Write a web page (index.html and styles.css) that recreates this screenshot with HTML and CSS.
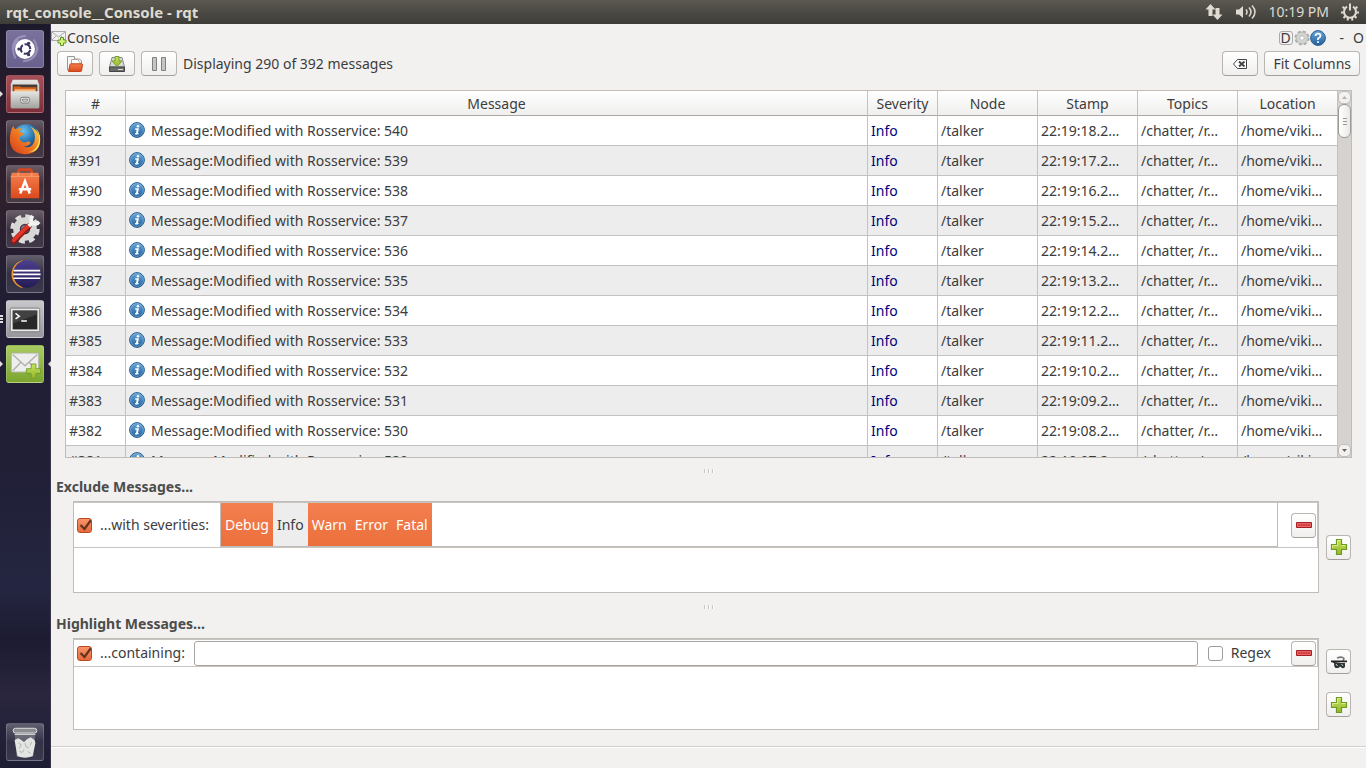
FILE: index.html
```html
<!DOCTYPE html>
<html lang="en">
<head>
<meta charset="utf-8">
<title>rqt_console__Console - rqt</title>
<link rel="stylesheet" href="styles.css">
</head>
<body>
<svg class="defs" aria-hidden="true">
  <defs>
    <linearGradient id="g-blue" x1="0" y1="0" x2="0" y2="1"><stop offset="0" stop-color="#6aa5da"/><stop offset="1" stop-color="#21619c"/></linearGradient>
    <linearGradient id="g-green" x1="0" y1="0" x2="0" y2="1"><stop offset="0" stop-color="#c9e45c"/><stop offset="1" stop-color="#92b52c"/></linearGradient>
    <linearGradient id="g-orange" x1="0" y1="0" x2="0" y2="1"><stop offset="0" stop-color="#f47f4e"/><stop offset="1" stop-color="#dc4a1c"/></linearGradient>
    <linearGradient id="g-silver" x1="0" y1="0" x2="0" y2="1"><stop offset="0" stop-color="#e6e6e4"/><stop offset="1" stop-color="#a2a29e"/></linearGradient>
    <radialGradient id="g-globe" cx=".4" cy=".25" r=".7"><stop offset="0" stop-color="#6cc3ec"/><stop offset=".6" stop-color="#256fae"/><stop offset="1" stop-color="#173d72"/></radialGradient>
    <linearGradient id="g-fox" x1="0" y1="1" x2="1" y2="0"><stop offset="0" stop-color="#d9381b"/><stop offset=".55" stop-color="#f08122"/><stop offset="1" stop-color="#ffe14d"/></linearGradient>
    <linearGradient id="g-eclipse" x1="0" y1="0" x2="0" y2="1"><stop offset="0" stop-color="#4b3f8f"/><stop offset="1" stop-color="#241b55"/></linearGradient>
    <symbol id="info" viewBox="0 0 16 16">
      <circle cx="8" cy="8" r="7.4" fill="url(#g-blue)" stroke="#285f92"/>
      <circle cx="8" cy="8" r="6.4" fill="none" stroke="#9cc4e8" stroke-opacity=".6" stroke-width=".8"/>
      <circle cx="9" cy="4.3" r="1.3" fill="#fff"/>
      <path d="M6.2 7h2.9L8.1 11.6h1.5M6 11.6 7.6 11.9 8.5 7" fill="none" stroke="#fff" stroke-width="1.4"/>
    </symbol>
    <symbol id="plus" viewBox="0 0 18 18">
      <path d="M6.5 1.5h5v5h5v5h-5v5h-5v-5h-5v-5h5z" fill="url(#g-green)" stroke="#6d9a23" stroke-width="1.2"/>
      <path d="M7.5 7.5v-5h3M2.5 10V7.5h5m4 0h4" fill="none" stroke="#e2f29a" stroke-width=".8"/>
    </symbol>
    <symbol id="minus" viewBox="0 0 16 6">
      <path d="M.5.5h15v5H.5z" fill="#d64545" stroke="#a91d24"/>
      <path d="M1.5 1.5h13v3h-13z" fill="none" stroke="#ea7676" stroke-width=".7"/>
    </symbol>
  </defs>
</svg>

<header class="topbar">
  <h1 class="topbar-title">rqt_console__Console - rqt</h1>
  <svg class="ind-net" viewBox="0 0 18 16"><path d="M5.500 0 .5 5.500h3V12h4V5.500h3zM12.500 16l-5-5.500h3V4h4v6.500h3z" fill="#dfdbd2"/></svg>
  <svg class="ind-vol" viewBox="0 0 20 16"><path d="M0 5.500h3L7 2v12l-4-3.500H0z" fill="#dfdbd2"/><path d="M10 5.500q2 2.500 0 5M13 3.500q4 4.500 0 9M16 1.500q6 6.500 0 13" fill="none" stroke="#dfdbd2" stroke-width="1.5"/></svg>
  <time class="clock">10:19 PM</time>
  <svg class="ind-power" viewBox="0 0 18 18"><path d="M9 .5v7M6 3.600a6 6 0 1 0 6 0" fill="none" stroke="#dfdbd2" stroke-width="2"/><path d="M3.500 5 1.500 4M14.500 5l2-1M2.500 9.500H0M15.500 9.500H18M4.500 13 2.500 15M13.500 13l2 2M7 15l-.500 2.500M11 15l.500 2.500" stroke="#dfdbd2" stroke-width="2"/></svg>
</header>

<div class="desktop">
  <nav class="launcher" aria-label="Launcher">
    <button class="tile tile-dash" aria-label="Dash">
      <svg viewBox="0 0 38 38"><path d="M6 20Q6 6 20 5M32 17Q32 31 17 32M9 29Q3 18 12 9M28 9Q36 20 26 29" fill="none" stroke="#c1b9dc" stroke-opacity=".5" stroke-width="2"/><circle cx="19" cy="19" r="10.500" fill="#fff"/><circle cx="19.500" cy="19" r="5" fill="none" stroke="#3e3562" stroke-width="2.300" stroke-dasharray="8.500 2" stroke-dashoffset="-1"/><circle cx="12.500" cy="19" r="1.700" fill="#3e3562"/><circle cx="22.800" cy="13" r="1.700" fill="#3e3562"/><circle cx="22.800" cy="25" r="1.700" fill="#3e3562"/></svg>
    </button>
    <button class="tile tile-files running" aria-label="Files">
      <svg viewBox="0 0 38 38"><path d="M6 4h26l2 5v24q0 1-1 1H5q-1 0-1-1V9z" fill="url(#g-silver)"/><path d="M6 9h26v9H6z" fill="#463c37"/><path d="M7 11h7l1 1h16v6H7z" fill="#d9611e"/><path d="M8 14h22v4H8z" fill="#f8ba78"/><path d="M4 16h30v17q0 1-1 1H5q-1 0-1-1z" fill="url(#g-silver)"/><rect x="14.500" y="22.500" width="9" height="6" rx="1.500" fill="#eee" stroke="#777"/><path d="M16.500 24.500h5v2h-5z" fill="#fff" stroke="#777"/></svg>
    </button>
    <button class="tile" aria-label="Firefox">
      <svg viewBox="0 0 38 38"><circle cx="20" cy="18" r="14.500" fill="url(#g-globe)"/><path d="M4 11q1-4 3-6 0 3 2 4 3-2 7-1-3 2-2 4 2 1 4 1 0 2-4 3-1 2 0 4 3 4 7 2 3-1 4 1-2 4-8 4 9 3 12-6 2-8-4-15 10 5 10 14-1 14-15 15Q4 35 3 20q0-5 1-9z" fill="url(#g-fox)"/><path d="M30 8q6 7 3 16-3 8-11 9 13 0 13-14 0-7-5-11z" fill="#ffe45a"/></svg>
    </button>
    <button class="tile" aria-label="Software Center">
      <svg viewBox="0 0 38 38"><path d="M12 11V6q0-2 2-2h10q2 0 2 2v5" fill="none" stroke="#d5461f" stroke-width="3"/><path d="M5 7h28l1 4v23H4V11z" fill="url(#g-orange)"/><path d="M12 11V7m14 4V7" stroke="#f49a6c" stroke-width="2"/><path d="M4 11h30" stroke="#fa9a6b"/><path d="M14 29 19 16l5 13M12.500 24.500h13" fill="none" stroke="#fff" stroke-width="2.600"/></svg>
    </button>
    <button class="tile" aria-label="System Settings">
      <svg viewBox="0 0 38 38"><circle cx="19" cy="19" r="13.500" fill="none" stroke="#dcdcda" stroke-width="4" stroke-dasharray="6.200 4.400"/><circle cx="19" cy="19" r="9" fill="none" stroke="#d7d7d5" stroke-width="7"/><circle cx="19" cy="19" r="4" fill="#817f83"/><path d="M7 32 23 16" stroke="#8e1713" stroke-width="6" stroke-linecap="round"/><path d="M7 31 22 16" stroke="#df352a" stroke-width="4" stroke-linecap="round"/><path d="m23 16 5-5" stroke="#f3f3f1" stroke-width="4"/><path d="M27 5q-3 5 0 7.500 3 2.500 7-1" fill="none" stroke="#f3f3f1" stroke-width="4"/></svg>
    </button>
    <button class="tile" aria-label="Eclipse">
      <svg viewBox="0 0 38 38"><path d="M17 4.500a15 15 0 0 0 0 29.500 20 20 0 0 1 0-29.500z" fill="#f19a27"/><circle cx="21" cy="19" r="14.500" fill="url(#g-eclipse)"/><path d="M7 15.500h28M6.500 19.500h29M7 23.500h28" stroke="#fff" stroke-width="1.800"/></svg>
    </button>
    <button class="tile tile-term multi" aria-label="Terminal">
      <svg viewBox="0 0 38 38"><rect x="3.500" y="7.500" width="31" height="25" rx="1.500" fill="#e9e9e8" stroke="#777"/><path d="M6 10h26v20H6z" fill="#282828"/><path d="M6 10h26v4L6 24z" fill="#555" opacity=".55"/><path d="m9 13 4 3-4 3M15 21h6" fill="none" stroke="#fff" stroke-width="1.600"/></svg>
    </button>
    <button class="tile tile-rqt running active" aria-label="rqt console">
      <svg viewBox="0 0 38 38"><rect x="4.500" y="7.500" width="29" height="20" rx="1" fill="#eee" stroke="#aeb5a3"/><path d="m6 26 9-9m17 9-9-9M6 9l13 12L32 9" fill="none" stroke="#b2b2ae" stroke-width="1.500"/><path d="M25.500 19h5v5h5v5h-5v5h-5v-5h-5v-5h5z" fill="url(#g-green)" stroke="#70a02c"/></svg>
    </button>
    <button class="tile tile-trash" aria-label="Trash">
      <svg viewBox="0 0 38 38"><path d="M8 8h22l-2 26H10z" fill="#ccc" opacity=".3"/><path d="M8 17l4-2 3 2 3 2 3-3 4-2 4 3 1 3-3 14q-8 3-16 0z" fill="#e2e5e2"/><path d="m12 20 3 2-2 4M19 20l1 4 3 1M26 19l-2 4M13 29l3 1 2-3M22 29l3 2" fill="none" stroke="#aeb3af"/><rect x="6.500" y="4.500" width="25" height="5" rx="2.500" fill="#8c8d90" stroke="#e4e4e4"/><path d="M8 11h22" stroke="#dedede"/></svg>
    </button>
  </nav>

  <main class="window">
    <div class="dock-title">
      <svg class="dock-icon" viewBox="0 0 16 16"><path d="M.5 1.500h14v9H.5z" fill="#f1f1ef" stroke="#aaa"/><path d="m1 2 6.500 5L14 2M1 10l4.500-4.500M14 10 9.500 5.500" fill="none" stroke="#aaa"/><path d="M9.500 7.500h3v2.500H15v3h-2.500v2.500h-3V13H7v-3h2.500z" fill="#d5ef81" stroke="#5e951c"/></svg>
      <h2 class="dock-name">Console</h2>
      <button class="mini mini-d">D</button>
      <button class="mini" aria-label="Settings"><svg viewBox="0 0 16 16"><circle cx="8" cy="8" r="6.500" fill="none" stroke="#aaa" stroke-width="2" stroke-dasharray="3 2.100"/><circle cx="8" cy="8" r="4.300" fill="none" stroke="#d2d2d0" stroke-width="3.500"/><circle cx="8" cy="8" r="6" fill="none" stroke="#aaa" stroke-width=".7"/><circle cx="8" cy="8" r="2.200" fill="#fff" stroke="#aaa" stroke-width=".8"/></svg></button>
      <button class="mini" aria-label="Help"><svg viewBox="0 0 16 16"><circle cx="8" cy="8" r="7.400" fill="url(#g-blue)" stroke="#285f92"/><path d="M5.500 6Q5.500 3.700 8 3.700T10.500 6Q10.500 7.300 8 8.500V10" fill="none" stroke="#fff" stroke-width="1.700"/><path d="M7.100 11.200h1.800V13H7.100z" fill="#fff"/></svg></button>
      <button class="mini mini-text mini-gap">-</button>
      <button class="mini mini-text">O</button>
    </div>

    <div class="toolbar">
      <button class="btn btn-tool" aria-label="Load from file"><svg viewBox="0 0 16 16"><path d="M.5 14V.5h7V3h5l2 2v9z" fill="#f6f6f4" stroke="#999"/><path d="M4.500 3.500h6l2.500 3V9h-8.500z" fill="#fff" stroke="#aaa"/><path d="M1.500 15.500 3 8.500q.2-.7 1-.7h10.500q1 0 1 .8L14.500 15q-.2.500-.8.500z" fill="url(#g-orange)" stroke="#c4451b"/></svg></button>
      <button class="btn btn-tool" aria-label="Save to file"><svg viewBox="0 0 16 16"><path d="M3 1.500h10l2.500 9.500H.5z" fill="#d9d9d7" stroke="#888"/><path d="M.5 11h15v4.500H.5z" fill="#696b69" stroke="#444"/><path d="M9 13.500h5" stroke="#ddd"/><path d="M6 .5h4v4.500h3l-5 5.500L3 5h3z" fill="url(#g-green)" stroke="#76a02c"/></svg></button>
      <button class="btn btn-tool" aria-label="Pause"><svg viewBox="0 0 16 16"><path d="M1.500 1.500h4v13h-4zM10.500 1.500h4v13h-4z" fill="#c3c6c1" stroke="#7f827d"/></svg></button>
      <p class="status">Displaying 290 of 392 messages</p>
      <button class="btn btn-tool" aria-label="Clear"><svg viewBox="0 0 16 16"><path d="M5.500 3.500h9v9h-9L1.500 8z" fill="#fff" stroke="#444"/><path d="m7 5.500 5.500 5M12.500 5.500 7 10.500" stroke="#444" stroke-width="2"/></svg></button>
      <button class="btn btn-fit">Fit Columns</button>
    </div>

    <section class="log" aria-label="Messages">
      <div class="log-view">
        <table class="grid">
          <colgroup><col class="c-num"><col><col class="c-sev"><col class="c-std"><col class="c-std"><col class="c-std"><col class="c-std"></colgroup>
          <thead><tr><th>#</th><th>Message</th><th>Severity</th><th>Node</th><th>Stamp</th><th>Topics</th><th>Location</th></tr></thead>
          <tbody>
            <tr><td>#392</td><td><svg class="info"><use href="#info"/></svg>Message:Modified with Rosservice: 540</td><td class="sev">Info</td><td>/talker</td><td>22:19:18.2…</td><td>/chatter, /r…</td><td>/home/viki…</td></tr>
            <tr><td>#391</td><td><svg class="info"><use href="#info"/></svg>Message:Modified with Rosservice: 539</td><td class="sev">Info</td><td>/talker</td><td>22:19:17.2…</td><td>/chatter, /r…</td><td>/home/viki…</td></tr>
            <tr><td>#390</td><td><svg class="info"><use href="#info"/></svg>Message:Modified with Rosservice: 538</td><td class="sev">Info</td><td>/talker</td><td>22:19:16.2…</td><td>/chatter, /r…</td><td>/home/viki…</td></tr>
            <tr><td>#389</td><td><svg class="info"><use href="#info"/></svg>Message:Modified with Rosservice: 537</td><td class="sev">Info</td><td>/talker</td><td>22:19:15.2…</td><td>/chatter, /r…</td><td>/home/viki…</td></tr>
            <tr><td>#388</td><td><svg class="info"><use href="#info"/></svg>Message:Modified with Rosservice: 536</td><td class="sev">Info</td><td>/talker</td><td>22:19:14.2…</td><td>/chatter, /r…</td><td>/home/viki…</td></tr>
            <tr><td>#387</td><td><svg class="info"><use href="#info"/></svg>Message:Modified with Rosservice: 535</td><td class="sev">Info</td><td>/talker</td><td>22:19:13.2…</td><td>/chatter, /r…</td><td>/home/viki…</td></tr>
            <tr><td>#386</td><td><svg class="info"><use href="#info"/></svg>Message:Modified with Rosservice: 534</td><td class="sev">Info</td><td>/talker</td><td>22:19:12.2…</td><td>/chatter, /r…</td><td>/home/viki…</td></tr>
            <tr><td>#385</td><td><svg class="info"><use href="#info"/></svg>Message:Modified with Rosservice: 533</td><td class="sev">Info</td><td>/talker</td><td>22:19:11.2…</td><td>/chatter, /r…</td><td>/home/viki…</td></tr>
            <tr><td>#384</td><td><svg class="info"><use href="#info"/></svg>Message:Modified with Rosservice: 532</td><td class="sev">Info</td><td>/talker</td><td>22:19:10.2…</td><td>/chatter, /r…</td><td>/home/viki…</td></tr>
            <tr><td>#383</td><td><svg class="info"><use href="#info"/></svg>Message:Modified with Rosservice: 531</td><td class="sev">Info</td><td>/talker</td><td>22:19:09.2…</td><td>/chatter, /r…</td><td>/home/viki…</td></tr>
            <tr><td>#382</td><td><svg class="info"><use href="#info"/></svg>Message:Modified with Rosservice: 530</td><td class="sev">Info</td><td>/talker</td><td>22:19:08.2…</td><td>/chatter, /r…</td><td>/home/viki…</td></tr>
            <tr><td>#381</td><td><svg class="info"><use href="#info"/></svg>Message:Modified with Rosservice: 529</td><td class="sev">Info</td><td>/talker</td><td>22:19:07.2…</td><td>/chatter, /r…</td><td>/home/viki…</td></tr>
          </tbody>
        </table>
      </div>
      <div class="scroll" aria-hidden="true">
        <div class="scroll-end"><svg viewBox="0 0 7 4"><path d="M0 4 3.500 0 7 4z" fill="#b5b2af"/></svg></div>
        <div class="scroll-thumb"><i></i><i></i><i></i></div>
        <div class="scroll-track"></div>
        <div class="scroll-end"><svg viewBox="0 0 7 4"><path d="M0 0h7L3.500 4z" fill="#666"/></svg></div>
      </div>
    </section>

    <div class="handle"><i></i><i></i><i></i></div>

    <section class="filters">
      <h3 class="filters-title">Exclude Messages...</h3>
      <div class="filters-body">
        <div class="filter-box">
          <div class="filter">
            <label class="check"><input type="checkbox" class="tick" checked>...with severities:</label>
            <div class="levels">
              <button class="level" aria-pressed="true">Debug</button>
              <button class="level" aria-pressed="false">Info</button>
              <button class="level" aria-pressed="true">Warn</button>
              <button class="level" aria-pressed="true">Error</button>
              <button class="level" aria-pressed="true">Fatal</button>
            </div>
            <button class="btn btn-small" aria-label="Remove filter"><svg class="i-minus"><use href="#minus"/></svg></button>
          </div>
        </div>
        <div class="side side-one">
          <button class="btn btn-small" aria-label="Add exclude filter"><svg><use href="#plus"/></svg></button>
        </div>
      </div>
    </section>

    <div class="handle"><i></i><i></i><i></i></div>

    <section class="filters">
      <h3 class="filters-title">Highlight Messages...</h3>
      <div class="filters-body">
        <div class="filter-box">
          <div class="filter">
            <label class="check" for="containing"><input type="checkbox" class="tick" aria-label="Enable filter" checked>...containing:</label>
            <input type="text" class="field" id="containing">
            <label class="check check-regex"><input type="checkbox" class="tick">Regex</label>
            <button class="btn btn-small" aria-label="Remove filter"><svg class="i-minus"><use href="#minus"/></svg></button>
          </div>
        </div>
        <div class="side side-two">
          <button class="btn btn-small" aria-label="Highlight only"><svg class="i-only" viewBox="0 0 16 16"><path d="M6 4q5-2 7 .5l-1 2.500" fill="none" stroke="#777" stroke-width="1.600"/><path d="M0 6.500h16v1.800H10L3 9 0 8z" fill="#222"/><path d="M3 9h11v4q-1 1.500-3 1L9 12.500 7.500 14H4.500Q3 13 3 9z" fill="#2f3535"/><path d="m5 10 1.500 2M10.500 10l1.500 2" stroke="#b8cccc"/></svg></button>
          <button class="btn btn-small" aria-label="Add highlight filter"><svg><use href="#plus"/></svg></button>
        </div>
      </div>
    </section>

    <footer class="statusbar"></footer>
  </main>
</div>
</body>
</html>
```
FILE: styles.css
```css
* { box-sizing: border-box; }

body {
  margin: 0;
  height: 100vh;
  display: flex;
  flex-direction: column;
  overflow: hidden;
  background: #f2f1f0;
  color: #3c3c3c;
  font: 14px/20px "Noto Sans", "Open Sans", sans-serif;
}

h1, h2, h3, p { margin: 0; font-size: inherit; font-weight: normal; }
button, input { font: inherit; color: inherit; margin: 0; padding: 0; }
button { border: 0; background: none; }
svg { display: block; }
.defs { position: absolute; width: 0; height: 0; }

/* Top panel */
.topbar {
  flex: none;
  height: 24px;
  padding: 0 7px 0 6px;
  display: flex;
  align-items: center;
  background: linear-gradient(#5a5850, #3d3c37);
  color: #dfdbd2;
}
.topbar-title { flex: 1; font-size: 15px; font-weight: bold; }
.ind-net { width: 18px; height: 16px; margin-right: 13px; }
.ind-vol { width: 20px; height: 16px; margin-right: 12px; }
.clock { margin-right: 12px; }
.ind-power { width: 18px; height: 18px; }

.desktop { flex: 1; min-height: 0; display: flex; }

/* Launcher */
.launcher {
  flex: none;
  width: 51px;
  padding: 6px 7px 7px 6px;
  display: flex;
  flex-direction: column;
  gap: 7px;
  border-right: 1px solid #38344a;
  background: linear-gradient(#1b192b, #2b1c2c 12%, #30202c 22%, #211e34 36%, #201f36 58%, #242540 76%, #1c1b31 83%, #29263e 90%, #1d1d34);
}
.tile {
  position: relative;
  width: 38px;
  height: 38px;
  border: 1px solid rgba(255, 255, 255, .18);
  border-radius: 3px;
  background: linear-gradient(rgba(255, 255, 255, .28), rgba(255, 255, 255, .08) 50%, rgba(255, 255, 255, .12));
}
.tile svg { width: 36px; height: 36px; }
.tile-dash { background: linear-gradient(#7a719c, #6a618f); }
.tile-files { background: linear-gradient(#a64f58, #7f2e39); }
.tile-term { background: linear-gradient(#c8c7ca, #99979d); }
.tile-rqt { background: linear-gradient(#a9cb62, #7ba52f); }
.tile-trash { margin-top: auto; }
.running::before, .active::after {
  content: "";
  position: absolute;
  top: 15px;
  border: 3px solid transparent;
}
.running::before { left: -7px; border-left-color: #dedede; border-right-width: 0; }
.active::after { right: -8px; border-right-color: #dedede; border-left-width: 0; }
.multi::before {
  content: "";
  position: absolute;
  left: -7px;
  top: 14px;
  width: 3px;
  height: 8px;
  background: repeating-linear-gradient(#dedede 0 2px, transparent 2px 3px);
}

/* Window */
.window { flex: 1; min-width: 0; display: flex; flex-direction: column; }

.dock-title {
  flex: none;
  height: 27px;
  padding: 0 2px 0 0;
  display: flex;
  align-items: center;
}
.dock-icon { width: 16px; height: 16px; }
.dock-name { flex: 1; }
.mini { height: 16px; line-height: 16px; }
.mini svg { width: 16px; height: 16px; }
.mini-d { width: 14px; height: 14px; line-height: 12px; margin-right: 1px; border: 1px solid #aaa; border-radius: 3px; }
.mini-gap { margin-left: 14px; margin-right: 9px; }

.btn {
  flex: none;
  display: flex;
  align-items: center;
  justify-content: center;
  height: 25px;
  border: 1px solid #b9b5b0;
  border-bottom-color: #a3a09c;
  border-radius: 4px;
  background: linear-gradient(#fff, #f0efee);
}
.btn-tool { width: 36px; }
.btn-tool svg { width: 16px; height: 16px; }
.btn-fit { padding: 0 8px; }
.btn-small { width: 25px; }
.btn-small svg { width: 18px; height: 18px; }
.btn-small .i-minus { width: 16px; height: 6px; }
.btn-small .i-only { width: 16px; height: 16px; }

.toolbar {
  flex: none;
  padding: 0 6px;
  display: flex;
  align-items: center;
  gap: 6px;
}
.status { flex: 1; }

/* Message table */
.log {
  flex: 1;
  min-height: 0;
  margin: 14px 14px 0;
  display: flex;
  border: 1px solid #c0bcb8;
  background: #fff;
}
.log-view { flex: 1; min-width: 0; overflow: hidden; }
.grid { width: 100%; table-layout: fixed; border-collapse: separate; border-spacing: 0; }
.c-num { width: 60px; }
.c-sev { width: 70px; }
.c-std { width: 100px; }
.grid th, .grid td { border: 0 solid #c4c2c0; border-width: 0 1px 1px 0; white-space: nowrap; overflow: hidden; }
.grid th {
  height: 25px;
  padding: 2px 0 0;
  border-bottom-color: #aaa7a4;
  background: linear-gradient(#fff, #f0efee);
  font-weight: normal;
}
.grid td { height: 30px; padding: 0 0 0 3px; }
.grid tbody tr:nth-child(even) { background: #ededed; }
.grid .sev { color: #00007f; }
.info { display: inline-block; width: 16px; height: 16px; margin-right: 6px; vertical-align: -2px; }

.scroll { flex: none; width: 13px; display: flex; flex-direction: column; background: #d5d2cf; }
.scroll-end {
  height: 13px;
  display: flex;
  align-items: center;
  justify-content: center;
  border: 1px solid #c0bcb8;
  border-radius: 5px;
  background: #f2f1f0;
}
.scroll-end svg { width: 5px; height: 3px; }
.scroll-thumb {
  height: 34px;
  display: flex;
  flex-direction: column;
  align-items: center;
  justify-content: center;
  gap: 2px;
  border: 1px solid #9c9995;
  border-radius: 6px;
  background: linear-gradient(90deg, #fff, #ebe9e7);
}
.scroll-thumb i { width: 4px; height: 1px; background: #999; }
.scroll-track { flex: 1; }

.handle { flex: none; height: 25px; display: flex; align-items: center; justify-content: center; gap: 2px; }
.filters + .handle { height: 27px; }
.handle i { width: 2px; height: 4px; border-left: 1px solid #c9c6c3; background: #fff; }

/* Filter groups */
.filters { flex: none; padding: 0 15px 0 5px; }
.filters-title { height: 18px; line-height: 8px; font-size: 14px; font-weight: bold; color: #4c4c4c; }
.filters-body { padding-left: 17px; display: flex; gap: 7px; }
.filter-box { flex: 1; min-width: 0; height: 92px; border: 1px solid #c0bcb8; background: #fff; }
.filter {
  display: flex;
  align-items: center;
  min-height: 28px;
  padding-right: 1px;
  border: 1px solid #c8c4c0;
  border-left: 0;
}
.check { display: flex; align-items: center; gap: 8px; padding-left: 3px; white-space: nowrap; }
.tick {
  appearance: none;
  width: 15px;
  height: 15px;
  border: 1px solid #a09b96;
  border-radius: 3px;
  background: #fff;
}
.tick:checked {
  border-color: #bb4a22;
  background: url("data:image/svg+xml,%3Csvg xmlns='http://www.w3.org/2000/svg' viewBox='0 0 13 13'%3E%3Cpath d='M2.500 6l4 4L13 1' fill='none' stroke='%2362331f' stroke-width='2.200'/%3E%3C/svg%3E"), linear-gradient(#f9936b, #e76b3b);
}
.levels {
  flex: 1;
  display: flex;
  margin: 0 13px 0 11px;
  border: 1px solid #c0bcb8;
  border-top: 0;
  height: 44px;
}
.level { padding: 0 4px; background: linear-gradient(#f47f4f, #eb6f3c); color: #fff; }
.level[aria-pressed="false"] { background: #ededed; color: inherit; }
.field {
  flex: 1;
  min-width: 0;
  height: 25px;
  margin: 0 7px 0 9px;
  padding: 0 4px;
  border: 1px solid #a9a49f;
  border-radius: 3px;
  background: #fff;
}
.check-regex { margin-right: 20px; }

.side { flex: none; display: flex; flex-direction: column; align-items: center; }
.side-one { justify-content: center; }
.side-two { padding: 11px 0 13px; justify-content: space-between; }

.statusbar { flex: none; margin-top: 16px; height: 22px; border-top: 1px solid #d2d0ce; box-shadow: inset 0 1px #fff; }
```
